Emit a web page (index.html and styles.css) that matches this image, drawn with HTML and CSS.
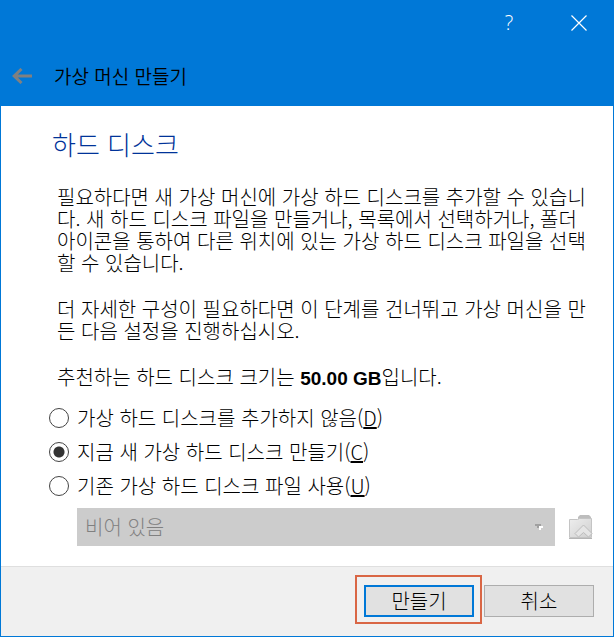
FILE: index.html
```html
<!DOCTYPE html>
<html lang="ko">
<head>
<meta charset="utf-8">
<meta name="viewport" content="width=device-width, initial-scale=1">
<title>가상 머신 만들기</title>
<link rel="stylesheet" href="styles.css">
</head>
<body>
<form class="dialog">
  <header class="titlebar">
    <div class="window-controls">
      <button type="button" class="icon-button help">?</button>
      <button type="button" class="icon-button" aria-label="닫기">
        <svg width="16" height="16" viewBox="0 0 16 16" fill="none" stroke="#fff" stroke-width="1.2"><path d="M.5 .5 15.5 15.5M15.5 .5 .5 15.5"/></svg>
      </button>
    </div>
    <div class="caption">
      <button type="button" class="icon-button back" aria-label="뒤로">
        <svg width="20" height="16" viewBox="0 0 20 16" fill="none" stroke="#808080" stroke-width="3"><path d="M9.5 1 2.2 8 9.5 15M2.5 8H20"/></svg>
      </button>
      <h1 class="title">가상 머신 만들기</h1>
    </div>
  </header>
  <main class="content">
    <h2 class="heading">하드 디스크</h2>
    <div class="description">
      <p>필요하다면 새 가상 머신에 가상 하드 디스크를 추가할 수 있습니<br>다. 새 하드 디스크 파일을 만들거나, 목록에서 선택하거나, 폴더<br>아이콘을 통하여 다른 위치에 있는 가상 하드 디스크 파일을 선택<br>할 수 있습니다.</p>
      <p>더 자세한 구성이 필요하다면 이 단계를 건너뛰고 가상 머신을 만<br>든 다음 설정을 진행하십시오.</p>
      <p>추천하는 하드 디스크 크기는 <strong>50.00 GB</strong>입니다.</p>
    </div>
    <div class="options">
      <label class="option"><input type="radio" name="disk"><span>가상 하드 디스크를 추가하지 않음(<u>D</u>)</span></label>
      <label class="option"><input type="radio" name="disk" checked><span>지금 새 가상 하드 디스크 만들기(<u>C</u>)</span></label>
      <label class="option"><input type="radio" name="disk"><span>기존 가상 하드 디스크 파일 사용(<u>U</u>)</span></label>
    </div>
    <div class="picker">
      <div class="select-wrap">
        <select class="select" aria-label="기존 가상 하드 디스크 파일" disabled><option>비어 있음</option></select>
        <svg class="select-arrow" width="10" height="8" viewBox="0 0 10 8" shape-rendering="crispEdges"><path fill="#fff" d="M4 2h4v2H6v2H4z"/><path fill="#a0a0a0" d="M0 0h6v2H4v2H2V2H0z"/></svg>
      </div>
      <button type="button" class="icon-button" aria-label="파일 선택" disabled>
        <svg width="26" height="26" viewBox="0 0 26 26">
          <defs><linearGradient id="folder" x1="0" y1="0" x2="1" y2="1"><stop offset="0" stop-color="#eee"/><stop offset="1" stop-color="#cfcfcf"/></linearGradient></defs>
          <path d="M10 5V3l2-2h9l2 2v3H10z" fill="#bdbdbd"/>
          <path d="M1.500 5.500h8l2-1h12v19h-22z" fill="url(#folder)" stroke="#c4c4c4"/>
          <path d="M1 24.500h23" stroke="#b5b5b5"/>
          <path d="M15.500 11 24 19.500l-3.500 3.500-5-4.500L10.500 23 7 19.500z" fill="#e5e5e5" stroke="#bcbcbc" stroke-linejoin="round"/>
        </svg>
      </button>
    </div>
  </main>
  <footer class="footer">
    <div class="highlight"><button type="submit" class="button primary">만들기</button></div>
    <button type="button" class="button">취소</button>
  </footer>
</form>
</body>
</html>
```
FILE: styles.css
```css
* { box-sizing: border-box; }

body {
  margin: 0;
  color: #000;
  font-family: "Noto Sans CJK KR", sans-serif;
  font-size: 20px;
  font-weight: 300;
  line-height: 22px;
}

button, select, input { margin: 0; font: inherit; }

h1, h2, p { margin: 0; font-weight: inherit; }

.dialog {
  display: flex;
  flex-direction: column;
  min-height: 100vh;
  border: 1px solid #0078d7;
  background: #fff;
}

.titlebar {
  padding-bottom: 14px;
  background: #0078d7;
}

.window-controls {
  display: flex;
  justify-content: flex-end;
  padding: 6px 18px 0 0;
  gap: 38px;
}

.icon-button {
  display: flex;
  align-items: center;
  justify-content: center;
  min-width: 32px;
  height: 32px;
  padding: 0;
  border: 0;
  background: none;
}

.help {
  color: #fff;
  font-family: "Open Sans", sans-serif;
}

.caption {
  display: flex;
  align-items: center;
  gap: 16px;
  padding: 21px 0 0 5px;
}

.title {
  font-size: 19px;
  font-weight: 350;
}

.content { flex: 1; padding: 24px 16px 20px 48px; }

.heading {
  padding-left: 3px;
  color: #003399;
  font-size: 26px;
  line-height: 28px;
}

.description {
  display: flex;
  flex-direction: column;
  gap: 24px;
  padding: 28px 0 0 8px;
}

.description strong {
  font-family: "Liberation Sans", sans-serif;
  font-size: 19px;
  font-weight: 700;
}

.options {
  display: flex;
  flex-direction: column;
  gap: 12px;
  padding-top: 17px;
}

.option {
  display: flex;
  align-items: center;
  gap: 8px;
}

.option input {
  appearance: none;
  width: 20px;
  height: 20px;
  border: 1px solid #444;
  border-radius: 50%;
  background: #fff;
}

.option input:checked {
  background: radial-gradient(circle, #333 5px, #fff 6px);
}

.picker {
  display: flex;
  align-items: center;
  gap: 10px;
  padding-left: 28px;
  margin-top: 11px;
}

.select-wrap {
  position: relative;
  flex: 1;
}

.select {
  appearance: none;
  width: 100%;
  height: 38px;
  padding: 0 8px;
  border: 0;
  border-radius: 0;
  background: #ccc;
  color: #808080;
  opacity: 1;
}

.select-arrow {
  position: absolute;
  top: 16px;
  right: 10px;
}

.footer {
  display: flex;
  align-items: baseline;
  justify-content: flex-end;
  gap: 2px;
  padding: 8px 19px 12px;
  border-top: 1px solid #dfdfdf;
  background: #f0f0f0;
}

.highlight {
  padding: 8px 6px 5px 7px;
  border: 2px solid #d96645;
}

.button {
  width: 110px;
  height: 32px;
  padding: 0;
  border: 1px solid #adadad;
  background: #e1e1e1;
  color: #000;
}

.primary { border: 2px solid #0078d7; }
```
